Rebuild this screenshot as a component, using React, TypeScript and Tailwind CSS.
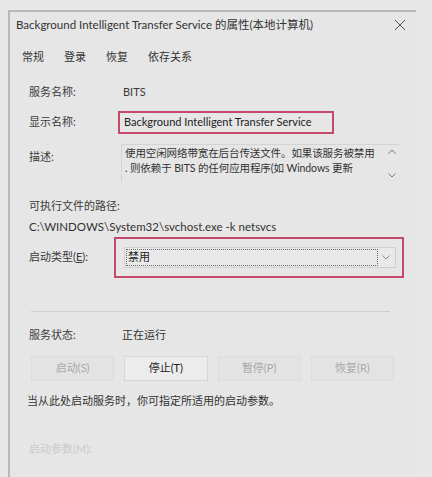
import React from 'react'

const font = { fontFamily: 'Lato, "Noto Sans CJK SC", sans-serif' }

function Btn({ label, active }: { label: string; active?: boolean }) {
  return (
    <div
      className={`h-[25px] flex items-center justify-center border text-[11px] ${
        active ? 'bg-[#ececec] border-[#d6d6d6] text-[#222]' : 'bg-[#e3e3e3] border-[#dcdcdc] text-[#a9a9a9]'
      }`}
    >
      {label}
    </div>
  )
}

export default function App() {
  return (
    <div className="w-[432px] h-[477px] bg-[#e7e7e7] overflow-hidden pt-[10px] pl-[8px]" style={font}>
      <div className="w-[408px] h-[480px] border-l-2 border-t-2 border-[#b9b9b9] bg-[#e6e6e6] text-[#3a3a3a]">
        {/* Title bar */}
        <div className="flex items-center justify-between h-[26px] pl-[6px] pr-[8px] text-[11.5px] text-[#333]">
          <span>Background Intelligent Transfer Service 的属性(本地计算机)</span>
          <svg width="12" height="12" viewBox="0 0 12 12" className="mr-[2px]">
            <path d="M1 1L11 11M11 1L1 11" stroke="#555" strokeWidth="1" />
          </svg>
        </div>

        {/* Tabs */}
        <div className="flex gap-[20px] pl-[12px] mt-[11px] text-[11px] text-[#333]">
          <span>常规</span>
          <span>登录</span>
          <span>恢复</span>
          <span>依存关系</span>
        </div>

        <div className="pl-[19px] pr-[12px] text-[11px]">
          {/* Service name */}
          <div className="flex items-center mt-[18px] h-[18px]">
            <span className="w-[94px]">服务名称:</span>
            <span>BITS</span>
          </div>

          {/* Display name */}
          <div className="flex items-center mt-[9px]">
            <span className="w-[89px]">显示名称:</span>
            <div className="border-2 border-[#c4496b] h-[23px] w-[216px] flex items-center pl-[4px] text-[#222] whitespace-nowrap">
              Background Intelligent Transfer Service
            </div>
          </div>

          {/* Description */}
          <div className="flex mt-[10px]">
            <span className="w-[92px] pt-[5px]">描述:</span>
            <div className="w-[278px] h-[38px] border-l border-t border-[#d4d4d4] flex">
              <div className="flex-1 pl-[3px] leading-[15px] pt-[1px] text-[#333] text-[10.5px] tracking-[-0.1px] whitespace-nowrap overflow-hidden">
                <div>使用空闲网络带宽在后台传送文件。如果该服务被禁用</div>
                <div>. 则依赖于 BITS 的任何应用程序(如 Windows 更新</div>
              </div>
              <div className="w-[14px] flex flex-col justify-between items-center py-[4px]">
                <svg width="8" height="5" viewBox="0 0 8 5">
                  <path d="M0.5 4.5L4 1L7.5 4.5" stroke="#777" fill="none" />
                </svg>
                <svg width="8" height="5" viewBox="0 0 8 5">
                  <path d="M0.5 0.5L4 4L7.5 0.5" stroke="#777" fill="none" />
                </svg>
              </div>
            </div>
          </div>

          {/* Path */}
          <div className="mt-[16px] h-[18px] flex items-center">可执行文件的路径:</div>
          <div className="mt-[2px] h-[18px] flex items-center text-[#333] text-[11.5px]">C:\WINDOWS\System32\svchost.exe -k netsvcs</div>

          {/* Startup type */}
          <div className="flex items-center mt-[1px]">
            <span className="w-[85px]">启动类型(<span className="underline">E</span>):</span>
            <div className="border-2 border-[#c4496b] w-[290px] h-[41px] flex items-center pl-[8px] pr-[6px]">
              <div className="flex-1 h-[21px] border border-[#d0d0d0] bg-[#e9e9e9] flex items-center p-[1px]">
                <div className="flex-1 h-full border border-dotted border-[#666] flex items-center pl-[1px] text-[#222]">禁用</div>
                <div className="w-[16px] flex justify-center">
                  <svg width="8" height="5" viewBox="0 0 8 5">
                    <path d="M0.5 0.5L4 4L7.5 0.5" stroke="#888" fill="none" />
                  </svg>
                </div>
              </div>
            </div>
          </div>

          {/* Separator */}
          <div className="mt-[33px] mr-[14px] ml-[2px] h-px bg-[#cfcfcf]" />

          {/* Status */}
          <div className="flex items-center mt-[15px] h-[18px]">
            <span className="w-[93px]">服务状态:</span>
            <span className="text-[#333]">正在运行</span>
          </div>

          {/* Buttons */}
          <div className="grid grid-cols-4 gap-x-[10px] mt-[11px] ml-[2px] mr-[10px]">
            <Btn label="启动(S)" />
            <Btn label="停止(T)" active />
            <Btn label="暂停(P)" />
            <Btn label="恢复(R)" />
          </div>

          <div className="mt-[12px] -ml-[2px] h-[18px] flex items-center text-[#333]">当从此处启动服务时，你可指定所适用的启动参数。</div>

          <div className="mt-[30px] h-[18px] flex items-center text-[#cbcbcb]">启动参数(M):</div>
        </div>
      </div>
    </div>
  )
}
